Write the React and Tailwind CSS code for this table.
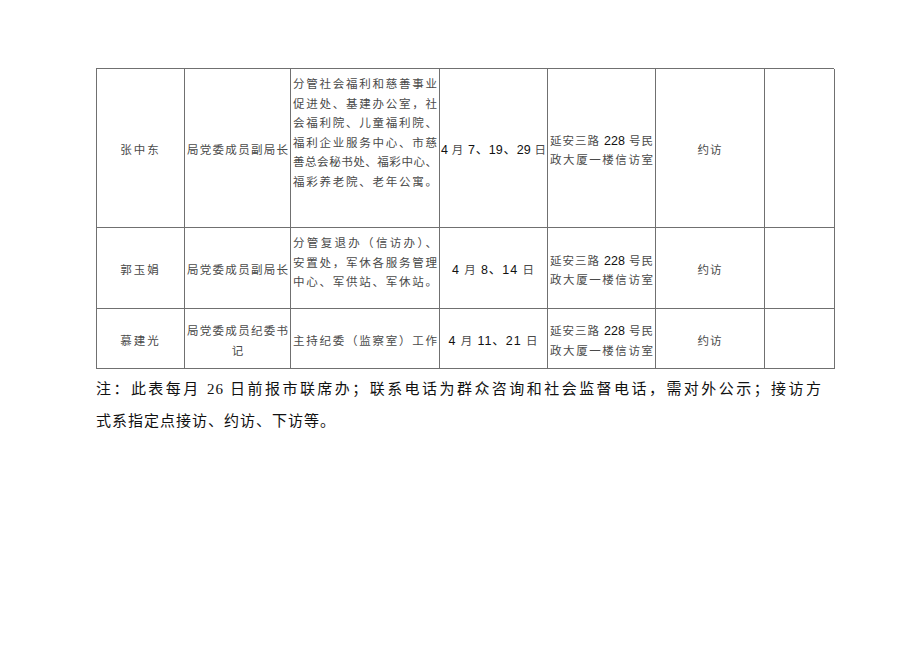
const cell = 'border-r border-b border-[#707070] flex flex-col justify-center pt-[6px]'
const jl = 'text-justify [text-align-last:justify] whitespace-nowrap'

function Lines({ lines, className = '' }) {
	return (
		<div className={`px-[2px] ${className}`}>
			{lines.map((l, i) => <div key={i} className={jl}>{l}</div>)}
		</div>
	)
}

const Num = ({ children }) => <span className="text-[#111] text-[12.5px]">{children}</span>

const rows = [
	{
		h: 'h-[159px]',
		name: '张中东',
		title: <Lines lines={['局党委成员副局长']} />,
		duty: ['分管社会福利和慈善事业', '促进处、基建办公室，社', '会福利院、儿童福利院、', '福利企业服务中心、市慈', '善总会秘书处、福彩中心、', '福彩养老院、老年公寓。'],
		dutyTop: true,
		date: <div className={`px-[1px] ${jl}`}><Num>4</Num> 月 <Num>7、19、29</Num> 日</div>,
	},
	{
		h: 'h-[81px]',
		name: '郭玉娟',
		title: <Lines lines={['局党委成员副局长']} />,
		duty: ['分管复退办（信访办）、', '安置处，军休各服务管理', '中心、军供站、军休站。'],
		dutyTop: true,
		date: <div className="text-center tracking-[1px]"><Num>4</Num> 月 <Num>8、14</Num> 日</div>,
	},
	{
		h: 'h-[60px]',
		name: '慕建光',
		title: (
			<div className="px-[2px]">
				<div className={jl}>局党委成员纪委书</div>
				<div className="text-center">记</div>
			</div>
		),
		duty: ['主持纪委（监察室）工作'],
		dutyTop: false,
		date: <div className="text-center tracking-[1px]"><Num>4</Num> 月 <Num>11、21</Num> 日</div>,
	},
]

export default function App() {
	return (
		<div className="w-[920px] h-[651px] bg-white overflow-hidden pt-[68px] pl-[96px]">
			<div className="grid grid-cols-[88px_106px_149px_108px_108px_109px_70px] w-[738px] border-t border-l border-[#707070] font-['Liberation_Sans','Noto_Sans_CJK_SC',sans-serif] text-[11.5px] leading-[19.5px] text-[#4a4a4a]">
				{rows.map(r => (
					<div key={r.name} className="contents">
						<div className={`${cell} ${r.h} items-center`}>
							<span className="tracking-[2px]">{r.name}</span>
						</div>
						<div className={`${cell} ${r.h}`}>{r.title}</div>
						<div className={`border-r border-b border-[#707070] flex flex-col ${r.dutyTop ? 'justify-start' : 'justify-center'} pt-[6px] ${r.h}`}>
							<Lines lines={r.duty} />
						</div>
						<div className={`${cell} ${r.h}`}>{r.date}</div>
						<div className={`${cell} ${r.h}`}>
							<div className="px-[2px]">
								<div className={jl}>延安三路 <Num>228</Num> 号民</div>
								<div className={jl}>政大厦一楼信访室</div>
							</div>
						</div>
						<div className={`${cell} ${r.h} items-center`}>
							<span className="tracking-[1px]">约访</span>
						</div>
						<div className={`${cell} ${r.h}`}></div>
					</div>
				))}
			</div>
			<div className="mt-[4px] w-[726px] font-['Liberation_Serif','Noto_Sans_CJK_SC',serif] text-[15px] leading-[32px] text-[#111] tracking-[1px]">
				<div className={jl}>注：此表每月 26 日前报市联席办；联系电话为群众咨询和社会监督电话，需对外公示；接访方</div>
				<div>式系指定点接访、约访、下访等。</div>
			</div>
		</div>
	)
}
